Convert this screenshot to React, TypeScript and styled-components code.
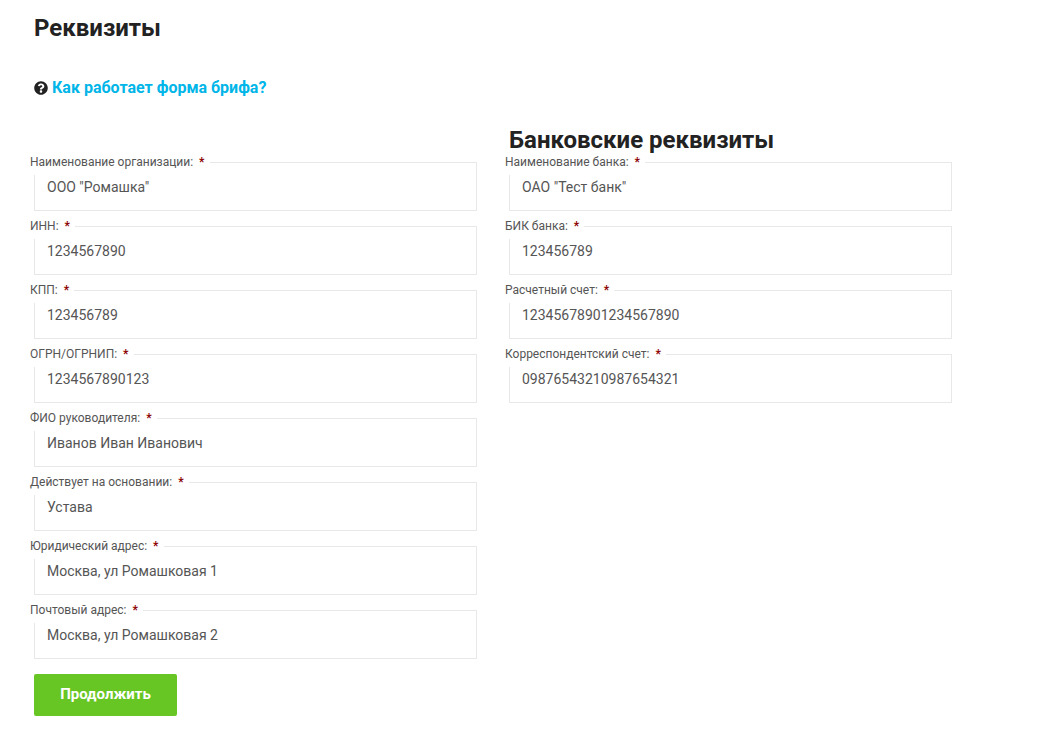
import React from "react";
import styled, { createGlobalStyle } from "styled-components";
import { FaQuestionCircle } from "react-icons/fa";

const leftFields = [
  { label: "Наименование организации:", value: 'ООО "Ромашка"' },
  { label: "ИНН:", value: "1234567890" },
  { label: "КПП:", value: "123456789" },
  { label: "ОГРН/ОГРНИП:", value: "1234567890123" },
  { label: "ФИО руководителя:", value: "Иванов Иван Иванович" },
  { label: "Действует на основании:", value: "Устава" },
  { label: "Юридический адрес:", value: "Москва, ул Ромашковая 1" },
  { label: "Почтовый адрес:", value: "Москва, ул Ромашковая 2" },
];

const rightFields = [
  { label: "Наименование банка:", value: 'ОАО "Тест банк"' },
  { label: "БИК банка:", value: "123456789" },
  { label: "Расчетный счет:", value: "12345678901234567890" },
  { label: "Корреспондентский счет:", value: "09876543210987654321" },
];

const GlobalStyle = createGlobalStyle`
  body {
    margin: 0;
    background: #fff;
    font-family: Roboto, "Liberation Sans", sans-serif;
  }
`;

const Page = styled.div`
  width: 1038px;
  height: 733px;
  box-sizing: border-box;
  padding: 14px 0 0 34px;
  overflow: hidden;
`;

const Title = styled.h2`
  margin: 0;
  font-size: 24px;
  line-height: 28px;
  font-weight: 700;
  color: #222;
`;

const HelpRow = styled.div`
  display: flex;
  align-items: center;
  gap: 4px;
  margin-top: 37px;
  height: 18px;
  color: #222;
  font-size: 14px;
`;

const HelpLink = styled.a`
  color: #00b5e8;
  font-size: 16px;
  line-height: 18px;
  font-weight: 700;
`;

const Columns = styled.div`
  display: grid;
  grid-template-columns: 443px 443px;
  column-gap: 32px;
  margin-top: 29px;
`;

const Column = styled.div`
  display: flex;
  flex-direction: column;
`;

const SubTitle = styled.h3`
  margin: 0;
  font-size: 24px;
  line-height: 28px;
  font-weight: 700;
  color: #222;
`;

const Spacer = styled.div`
  height: 28px;
`;

const FieldList = styled.div`
  display: flex;
  flex-direction: column;
  gap: 15px;
  margin-top: 8px;
`;

const Field = styled.div`
  position: relative;
  height: 49px;
  box-sizing: border-box;
  border: 1px solid #e8e8e8;
  padding: 14px 12px 0;
`;

const Label = styled.span`
  position: absolute;
  left: -5px;
  top: -8px;
  padding-right: 5px;
  background: #fff;
  font-size: 12px;
  line-height: 14px;
  height: 20px;
  color: #555;
  white-space: nowrap;
`;

const Required = styled.span`
  margin-left: 3px;
  color: #8b0000;
  font-weight: 700;
`;

const Value = styled.div`
  font-size: 14px;
  line-height: 20px;
  color: #555;
`;

const SubmitButton = styled.button`
  display: block;
  width: 143px;
  height: 42px;
  margin-top: 15px;
  padding: 0 0 2px;
  border: 0;
  border-radius: 2px;
  background: #67c623;
  color: #fff;
  font-family: inherit;
  font-size: 15px;
  font-weight: 700;
`;

const FormField = ({ label, value }: { label: string; value: string }) => (
  <Field>
    <Label>
      {label}
      <Required> *</Required>
    </Label>
    <Value>{value}</Value>
  </Field>
);

export default function App() {
  return (
    <Page>
      <GlobalStyle />
      <Title>Реквизиты</Title>
      <HelpRow>
        <FaQuestionCircle size={14} />
        <HelpLink>Как работает форма брифа?</HelpLink>
      </HelpRow>
      <Columns>
        <Column>
          <Spacer />
          <FieldList>
            {leftFields.map((f) => (
              <FormField key={f.label} label={f.label} value={f.value} />
            ))}
          </FieldList>
          <SubmitButton>Продолжить</SubmitButton>
        </Column>
        <Column>
          <SubTitle>Банковские реквизиты</SubTitle>
          <FieldList>
            {rightFields.map((f) => (
              <FormField key={f.label} label={f.label} value={f.value} />
            ))}
          </FieldList>
        </Column>
      </Columns>
    </Page>
  );
}
